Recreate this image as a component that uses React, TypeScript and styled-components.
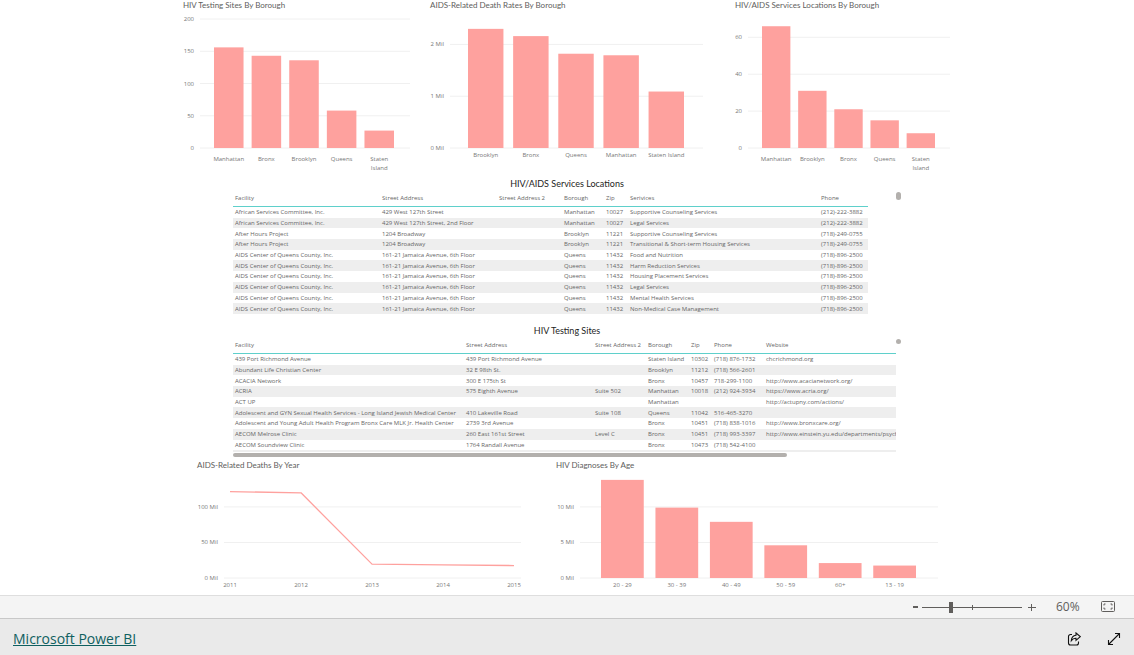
import React from "react";
import styled, { createGlobalStyle } from "styled-components";

const FONT = '"Open Sans", "Noto Sans", sans-serif';
const TITLE_FONT = 'Lato, "Open Sans", sans-serif';
const BAR = "#fea19e";
const BAR_RATIO = 0.785;

const GlobalStyle = createGlobalStyle`
  * { box-sizing: border-box; }
  body { margin: 0; background: #fff; font-family: ${FONT}; }
`;

const Page = styled.div`
  display: flex;
  flex-direction: column;
  min-height: 100vh;
`;

const Report = styled.main`
  flex: 1;
  width: 100%;
  max-width: 768px;
  margin: 0 auto;
`;

const TopRow = styled.div`
  display: grid;
  grid-template-columns: 247fr 305fr 216fr;
`;

const BottomRow = styled.div`
  display: grid;
  grid-template-columns: 359fr 395fr;
  padding: 3px 0 0 14px;
`;

const Panel = styled.section`
  min-width: 0;
`;

const PanelTitle = styled.h2`
  margin: 0;
  padding-bottom: 2px;
  font-family: ${TITLE_FONT};
  font-size: 8px;
  line-height: 10px;
  font-weight: 400;
  color: #605e5c;
  white-space: nowrap;
`;

const ChartSvg = styled.svg`
  display: block;
  width: 100%;
  font-family: ${FONT};
  font-size: 6px;
  fill: #777;
`;

const TableSection = styled.section<{ $gap: number }>`
  padding: ${(p) => p.$gap}px 50px 0 50px;
`;

const TableTitle = styled.h2`
  margin: 0;
  font-family: ${TITLE_FONT};
  font-size: 9px;
  line-height: 12px;
  font-weight: 400;
  color: #252423;
  text-align: center;
`;

const TableFrame = styled.div`
  display: flex;
  justify-content: space-between;
  align-items: flex-start;
`;

const TableClip = styled.div<{ $height: number }>`
  flex: 1;
  height: ${(p) => p.$height}px;
  overflow: hidden;
`;

const VThumb = styled.div<{ $height: number }>`
  width: 5px;
  height: ${(p) => p.$height}px;
  margin-top: 2px;
  border-radius: 3px;
  background: #b3b0ad;
`;

const HThumb = styled.div`
  width: 83%;
  height: 4px;
  margin-top: 1px;
  border-radius: 2px;
  background: #b3b0ad;
`;

const DataTable = styled.table<{ $width: number; $height: number }>`
  table-layout: fixed;
  width: ${(p) => p.$width}px;
  height: ${(p) => p.$height}px;
  border-collapse: separate;
  border-spacing: 0;
  font-size: 6px;
  line-height: 10px;
  color: #666;

  th, td {
    padding: 0 0 0 2px;
    font-weight: 400;
    text-align: left;
    white-space: nowrap;
  }
  thead tr { height: 17px; }
  tbody tr { height: 10px; }
  th { border-bottom: 1px solid #5fd0cb; }
  tbody tr:nth-child(even) { background: #eeeeee; }
`;

const ZoomBar = styled.div`
  display: flex;
  align-items: center;
  justify-content: flex-end;
  height: 23px;
  padding-right: 18px;
  border-top: 1px solid #dedede;
  background: #f4f4f4;
  color: #605e5c;
`;

const IconButton = styled.button`
  display: flex;
  align-items: center;
  justify-content: center;
  padding: 0;
  border: 0;
  background: none;
  color: inherit;
  font: inherit;
`;

const StepButton = styled(IconButton)`
  width: 14px;
  height: 20px;
`;

const SliderBox = styled.div`
  position: relative;
  display: flex;
  align-items: center;
  width: 100px;
  height: 20px;

  &::after {
    content: "";
    position: absolute;
    left: 50%;
    top: 8px;
    width: 1px;
    height: 5px;
    background: #605e5c;
  }
`;

const Slider = styled.input`
  appearance: none;
  width: 100%;
  height: 11px;
  margin: 0;
  background: linear-gradient(#605e5c, #605e5c) center / 100% 1px no-repeat;

  &::-webkit-slider-thumb {
    appearance: none;
    width: 4px;
    height: 11px;
    background: #605e5c;
  }
`;

const ZoomValue = styled.output`
  width: 42px;
  margin: 0 23px 0 0;
  padding-left: 20px;
  font-size: 12px;
  line-height: 16px;
  white-space: nowrap;
`;

const Footer = styled.footer`
  display: flex;
  align-items: center;
  justify-content: space-between;
  height: 37px;
  padding: 4px 13px 0 13px;
  border-top: 1px solid #c8c8c8;
  background: #eaeaea;
`;

const BrandLink = styled.a`
  font-size: 14px;
  line-height: 20px;
  color: #0f6060;
  text-decoration: underline;
`;

const FooterActions = styled.div`
  display: flex;
  gap: 26px;
  color: #111;
`;

type Tick = { value: number; label: string };
type Bar = { label: string[]; value: number };

type Frame = {
  width: number;
  height: number;
  left: number;
  right: number;
  base: number;
  perUnit: number;
};

const Grid = ({ frame, ticks }: { frame: Frame; ticks: Tick[] }) => (
  <g>
    {ticks.map((t) => {
      const y = frame.base - t.value * frame.perUnit;
      return (
        <g key={t.label}>
          <line x1={frame.left} x2={frame.right} y1={y} y2={y} stroke="#f0f0f0" />
          <text x={frame.left - 6} y={y + 2} textAnchor="end">
            {t.label}
          </text>
        </g>
      );
    })}
  </g>
);

type BarChartProps = {
  title: string;
  frame: Frame;
  ticks: Tick[];
  bars: Bar[];
  from: number;
  to: number;
  labelGap: number;
};

const BarChart = ({ title, frame, ticks, bars, from, to, labelGap }: BarChartProps) => {
  const pitch = (to - from) / (bars.length - 1 + BAR_RATIO);
  const barWidth = pitch * BAR_RATIO;
  return (
    <Panel>
      <PanelTitle>{title}</PanelTitle>
      <ChartSvg viewBox={`0 0 ${frame.width} ${frame.height}`} role="img" aria-label={title}>
        <Grid frame={frame} ticks={ticks} />
        {bars.map((b, i) => {
          const x = from + i * pitch;
          const h = b.value * frame.perUnit;
          return (
            <g key={b.label.join(" ")}>
              <rect x={x} y={frame.base - h} width={barWidth} height={h} fill={BAR} />
              {b.label.map((line, n) => (
                <text
                  key={line}
                  x={x + barWidth / 2}
                  y={frame.base + labelGap + n * 9}
                  textAnchor="middle"
                >
                  {line}
                </text>
              ))}
            </g>
          );
        })}
      </ChartSvg>
    </Panel>
  );
};

const LineChart = () => {
  const frame: Frame = { width: 359, height: 123, left: 27, right: 324, base: 106, perUnit: 0.711 };
  const years = ["2011", "2012", "2013", "2014", "2015"];
  const values = [121.5, 119.8, 19.5, 18.5, 17.5];
  const x = (i: number) => 33 + i * 71;
  return (
    <Panel>
      <PanelTitle>AIDS-Related Deaths By Year</PanelTitle>
      <ChartSvg
        viewBox={`0 0 ${frame.width} ${frame.height}`}
        role="img"
        aria-label="AIDS-Related Deaths By Year"
      >
        <Grid
          frame={frame}
          ticks={[
            { value: 0, label: "0 Mil" },
            { value: 50, label: "50 Mil" },
            { value: 100, label: "100 Mil" },
          ]}
        />
        <polyline
          points={values.map((v, i) => `${x(i)},${frame.base - v * frame.perUnit}`).join(" ")}
          fill="none"
          stroke={BAR}
          strokeWidth="1.3"
          strokeLinejoin="round"
        />
        {years.map((y, i) => (
          <text key={y} x={x(i)} y={frame.base + 9} textAnchor="middle">
            {y}
          </text>
        ))}
      </ChartSvg>
    </Panel>
  );
};

type GridTableProps = {
  label: string;
  columns: [string, number][];
  rows: string[][];
  width: number;
  height: number;
};

const GridTable = ({ label, columns, rows, width, height }: GridTableProps) => (
  <DataTable aria-label={label} $width={width} $height={height}>
    <colgroup>
      {columns.map(([name, w]) => (
        <col key={name} width={w} />
      ))}
    </colgroup>
    <thead>
      <tr>
        {columns.map(([name]) => (
          <th key={name} scope="col">
            {name}
          </th>
        ))}
      </tr>
    </thead>
    <tbody>
      {rows.map((r, i) => (
        <tr key={i}>
          {r.map((c, j) => (
            <td key={j}>{c}</td>
          ))}
        </tr>
      ))}
    </tbody>
  </DataTable>
);

const queens = (service: string) => [
  "AIDS Center of Queens County, Inc.",
  "161-21 Jamaica Avenue, 6th Floor",
  "",
  "Queens",
  "11432",
  service,
  "(718)-896-2500",
];

const serviceRows = [
  ["African Services Committee, Inc.", "429 West 127th Street", "", "Manhattan", "10027", "Supportive Counseling Services", "(212)-222-3882"],
  ["African Services Committee, Inc.", "429 West 127th Street, 2nd Floor", "", "Manhattan", "10027", "Legal Services", "(212)-222-3882"],
  ["After Hours Project", "1204 Broadway", "", "Brooklyn", "11221", "Supportive Counseling Services", "(718)-249-0755"],
  ["After Hours Project", "1204 Broadway", "", "Brooklyn", "11221", "Transitional & Short-term Housing Services", "(718)-249-0755"],
  queens("Food and Nutrition"),
  queens("Harm Reduction Services"),
  queens("Housing Placement Services"),
  queens("Legal Services"),
  queens("Mental Health Services"),
  queens("Non-Medical Case Management"),
];

const testingRows = [
  ["439 Port Richmond Avenue", "439 Port Richmond Avenue", "", "Staten Island", "10302", "(718) 876-1732", "chcrichmond.org"],
  ["Abundant Life Christian Center", "32 E 98th St.", "", "Brooklyn", "11212", "(718) 566-2601", ""],
  ["ACACIA Network", "300 E 175th St", "", "Bronx", "10457", "718-299-1100", "http://www.acacianetwork.org/"],
  ["ACRIA", "575 Eighth Avenue", "Suite 502", "Manhattan", "10018", "(212) 924-3934", "https://www.acria.org/"],
  ["ACT UP", "", "", "Manhattan", "", "", "http://actupny.com/actions/"],
  ["Adolescent and GYN Sexual Health Services - Long Island Jewish Medical Center", "410 Lakeville Road", "Suite 108", "Queens", "11042", "516-465-3270", ""],
  ["Adolescent and Young Adult Health Program Bronx Care MLK Jr. Health Center", "2739 3rd Avenue", "", "Bronx", "10451", "(718) 838-1016", "http://www.bronxcare.org/"],
  ["AECOM Melrose Clinic", "260 East 161st Street", "Level C", "Bronx", "10451", "(718) 993-3397", "http://www.einstein.yu.edu/departments/psych"],
  ["AECOM Soundview Clinic", "1764 Randall Avenue", "", "Bronx", "10473", "(718) 542-4100", ""],
  ["", "", "", "", "", "", ""],
];

const App = () => (
  <Page>
    <GlobalStyle />
    <Report>
      <TopRow>
        <BarChart
          title="HIV Testing Sites By Borough"
          frame={{ width: 247, height: 162, left: 17, right: 227, base: 136, perUnit: 0.645 }}
          ticks={[0, 50, 100, 150, 200].map((v) => ({ value: v, label: String(v) }))}
          bars={[
            { label: ["Manhattan"], value: 156 },
            { label: ["Bronx"], value: 143 },
            { label: ["Brooklyn"], value: 136 },
            { label: ["Queens"], value: 58 },
            { label: ["Staten", "Island"], value: 27 },
          ]}
          from={31}
          to={211}
          labelGap={13}
        />
        <BarChart
          title="AIDS-Related Death Rates By Borough"
          frame={{ width: 305, height: 162, left: 20, right: 273, base: 136, perUnit: 51.8 }}
          ticks={[0, 1, 2].map((v) => ({ value: v, label: `${v} Mil` }))}
          bars={[
            { label: ["Brooklyn"], value: 2.3 },
            { label: ["Bronx"], value: 2.16 },
            { label: ["Queens"], value: 1.82 },
            { label: ["Manhattan"], value: 1.79 },
            { label: ["Staten Island"], value: 1.09 },
          ]}
          from={38}
          to={254}
          labelGap={9}
        />
        <BarChart
          title="HIV/AIDS Services Locations By Borough"
          frame={{ width: 216, height: 162, left: 13, right: 215, base: 136, perUnit: 1.845 }}
          ticks={[0, 20, 40, 60].map((v) => ({ value: v, label: String(v) }))}
          bars={[
            { label: ["Manhattan"], value: 66 },
            { label: ["Brooklyn"], value: 31 },
            { label: ["Bronx"], value: 21 },
            { label: ["Queens"], value: 15 },
            { label: ["Staten", "Island"], value: 8 },
          ]}
          from={27}
          to={200}
          labelGap={13}
        />
      </TopRow>

      <TableSection $gap={4}>
        <TableTitle>HIV/AIDS Services Locations</TableTitle>
        <TableFrame>
          <TableClip $height={124}>
            <GridTable
              label="HIV/AIDS Services Locations"
              width={635}
              height={124}
              columns={[
                ["Facility", 147],
                ["Street Address", 117],
                ["Street Address 2", 65],
                ["Borough", 42],
                ["Zip", 24],
                ["Serivices", 191],
                ["Phone", 49],
              ]}
              rows={serviceRows}
            />
          </TableClip>
          <VThumb $height={8} />
        </TableFrame>
      </TableSection>

      <TableSection $gap={11}>
        <TableTitle>HIV Testing Sites</TableTitle>
        <TableFrame>
          <TableClip $height={115}>
            <GridTable
              label="HIV Testing Sites"
              width={801}
              height={124}
              columns={[
                ["Facility", 231],
                ["Street Address", 129],
                ["Street Address 2", 53],
                ["Borough", 43],
                ["Zip", 23],
                ["Phone", 52],
                ["Website", 270],
              ]}
              rows={testingRows}
            />
          </TableClip>
          <VThumb $height={5} />
        </TableFrame>
        <HThumb />
      </TableSection>

      <BottomRow>
        <LineChart />
        <BarChart
          title="HIV Diagnoses By Age"
          frame={{ width: 395, height: 123, left: 24, right: 382, base: 106, perUnit: 7.11 }}
          ticks={[0, 5, 10].map((v) => ({ value: v, label: `${v} Mil` }))}
          bars={[
            { label: ["20 - 29"], value: 13.8 },
            { label: ["30 - 39"], value: 9.9 },
            { label: ["40 - 49"], value: 7.9 },
            { label: ["50 - 59"], value: 4.6 },
            { label: ["60+"], value: 2.1 },
            { label: ["13 - 19"], value: 1.75 },
          ]}
          from={45}
          to={360}
          labelGap={9}
        />
      </BottomRow>
    </Report>

    <ZoomBar>
      <StepButton aria-label="Zoom out">
        <svg width="14" height="14" stroke="currentColor" strokeWidth="2">
          <path d="M5 7h5" />
        </svg>
      </StepButton>
      <SliderBox>
        <Slider type="range" aria-label="Zoom" min={10} max={190} defaultValue={60} />
      </SliderBox>
      <StepButton aria-label="Zoom in">
        <svg width="14" height="14" stroke="currentColor">
          <path d="M6 7.500h8M9.500 4v7" />
        </svg>
      </StepButton>
      <ZoomValue>60%</ZoomValue>
      <IconButton aria-label="Fit to page">
        <svg width="15" height="12" fill="none" stroke="currentColor">
          <rect x="0.500" y="0.500" width="13" height="10" rx="1" />
          <path d="M3 4.500V3h1.500M9.500 3H11v1.500M11 6.500V8H9.500M4.500 8H3V6.500" />
        </svg>
      </IconButton>
    </ZoomBar>

    <Footer>
      <BrandLink href="#">Microsoft Power BI</BrandLink>
      <FooterActions>
        <IconButton aria-label="Share">
          <svg width="14" height="14" fill="none" stroke="currentColor" strokeWidth="1.1">
            <path d="M5 2.500H3.500a2 2 0 0 0-2 2V11a2 2 0 0 0 2 2h6a2 2 0 0 0 2-2V9.500" />
            <path d="M9 1l4.300 3.700L9 8.400V6.300C7 6.200 5.500 7 4.300 8.700 4.500 5.500 6.200 3.400 9 3.200z" />
          </svg>
        </IconButton>
        <IconButton aria-label="Full screen">
          <svg width="14" height="14" fill="none" stroke="currentColor" strokeWidth="1.1">
            <path d="M1.500 12.500l11-11M8 1.500h4.500V6M1.500 8v4.500H6" />
          </svg>
        </IconButton>
      </FooterActions>
    </Footer>
  </Page>
);

export default App;
